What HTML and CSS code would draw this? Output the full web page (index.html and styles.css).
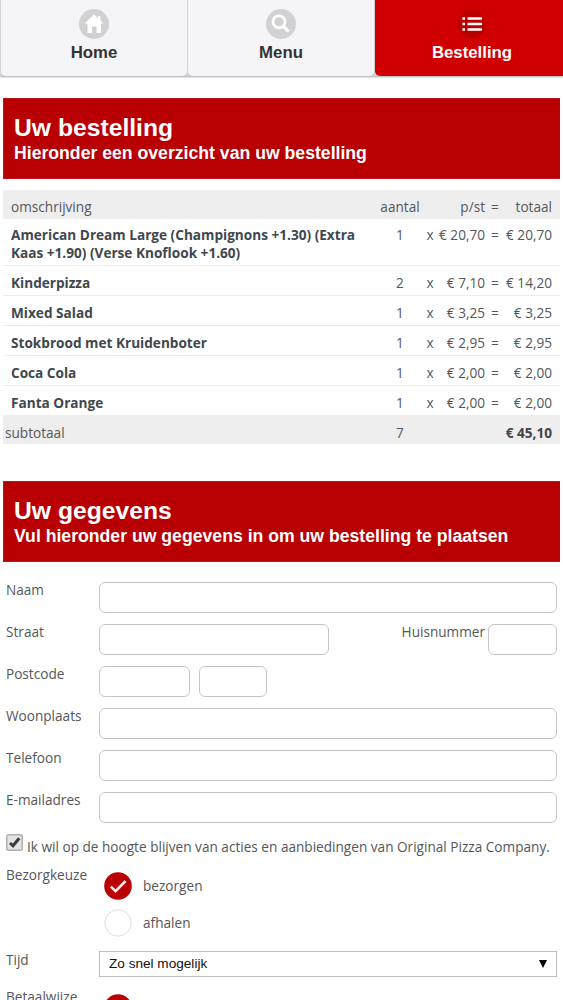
FILE: index.html
```html
<!DOCTYPE html>
<html lang="nl">
<head>
    <meta charset="UTF-8">
    <meta name="viewport" content="width=device-width, initial-scale=1.0">
    <title>Bestelling - Original Pizza Company</title>
    <link rel="stylesheet" href="styles.css">
</head>
<body>

    <nav class="tabs">
        <a class="tab" href="#">
            <svg class="tab-icon" viewBox="0 0 30 30">
                <circle cx="15" cy="15" r="15" fill="#d1d0d2"/>
                <path d="M15 5.5L5.5 14.5H8.5V24H13V17.5H17.5V24H22V14.5H24.5L21.5 11.5V7H19V9.2Z" fill="#fff"/>
            </svg>
            <span>Home</span>
        </a>
        <a class="tab" href="#">
            <svg class="tab-icon" viewBox="0 0 30 30">
                <circle cx="15" cy="15" r="15" fill="#d1d0d2"/>
                <circle cx="13" cy="12.8" r="6" fill="none" stroke="#fff" stroke-width="2.8"/>
                <path d="M17.2 17L22.6 22.6" stroke="#fff" stroke-width="3.2"/>
            </svg>
            <span>Menu</span>
        </a>
        <a class="tab active" href="#">
            <svg class="tab-icon" viewBox="0 0 30 30">
                <circle cx="15" cy="15" r="14" fill="#b90000"/>
                <path d="M11.5 9.5H24M11.5 15H24M11.5 20.5H24" stroke="#fff" stroke-width="2.5" stroke-linecap="round"/>
                <path d="M5.4 9.5H8M5.4 15H8M5.4 20.5H8" stroke="#fff" stroke-width="2.5"/>
            </svg>
            <span>Bestelling</span>
        </a>
    </nav>

    <div class="title">
        <h1>Uw bestelling</h1>
        <h2>Hieronder een overzicht van uw bestelling</h2>
    </div>

    <table class="order">
        <colgroup>
            <col>
            <col class="col-count">
            <col class="col-x">
            <col class="col-price">
            <col class="col-is">
            <col class="col-total">
        </colgroup>
        <thead>
            <tr><td>omschrijving</td><td>aantal</td><td></td><td>p/st</td><td>=</td><td>totaal</td></tr>
        </thead>
        <tbody>
            <tr><td>American Dream Large (Champignons +1.30) (Extra Kaas +1.90) (Verse Knoflook +1.60)</td><td>1</td><td>x</td><td>€ 20,70</td><td>=</td><td>€ 20,70</td></tr>
            <tr><td>Kinderpizza</td><td>2</td><td>x</td><td>€ 7,10</td><td>=</td><td>€ 14,20</td></tr>
            <tr><td>Mixed Salad</td><td>1</td><td>x</td><td>€ 3,25</td><td>=</td><td>€ 3,25</td></tr>
            <tr><td>Stokbrood met Kruidenboter</td><td>1</td><td>x</td><td>€ 2,95</td><td>=</td><td>€ 2,95</td></tr>
            <tr><td>Coca Cola</td><td>1</td><td>x</td><td>€ 2,00</td><td>=</td><td>€ 2,00</td></tr>
            <tr><td>Fanta Orange</td><td>1</td><td>x</td><td>€ 2,00</td><td>=</td><td>€ 2,00</td></tr>
        </tbody>
        <tfoot>
            <tr><td>subtotaal</td><td>7</td><td></td><td></td><td></td><td>€ 45,10</td></tr>
        </tfoot>
    </table>

    <div class="title">
        <h1>Uw gegevens</h1>
        <h2>Vul hieronder uw gegevens in om uw bestelling te plaatsen</h2>
    </div>

    <form class="details">
        <div class="row">
            <label for="naam">Naam</label>
            <input type="text" id="naam" class="wide">
        </div>
        <div class="row">
            <label for="straat">Straat</label>
            <input type="text" id="straat" class="street">
            <label for="huisnummer" class="number-label">Huisnummer</label>
            <input type="text" id="huisnummer" class="number">
        </div>
        <div class="row">
            <label for="postcode">Postcode</label>
            <input type="text" id="postcode" class="zip">
            <input type="text" id="postcodeLetters" class="zip-letters">
        </div>
        <div class="row">
            <label for="woonplaats">Woonplaats</label>
            <input type="text" id="woonplaats" class="wide">
        </div>
        <div class="row">
            <label for="telefoon">Telefoon</label>
            <input type="text" id="telefoon" class="wide">
        </div>
        <div class="row">
            <label for="email">E-mailadres</label>
            <input type="text" id="email" class="wide">
        </div>

        <div class="newsletter">
            <svg class="checkbox" viewBox="0 0 17 17">
                <rect x=".75" y=".75" width="15.5" height="15.5" rx="2" fill="#e4e4e4" stroke="#b0b0b0" stroke-width="1.5"/>
                <path d="M4 9L7 11.8L13.2 4.2" fill="none" stroke="#3c3c3c" stroke-width="3"/>
            </svg>
            <span>Ik wil op de hoogte blijven van acties en aanbiedingen van Original Pizza Company.</span>
        </div>

        <div class="choice">
            <span class="choice-label">Bezorgkeuze</span>
            <div class="options">
                <div class="option">
                    <svg class="radio" viewBox="0 0 28 28">
                        <circle cx="14" cy="14" r="13.8" fill="#b90004"/>
                        <path d="M6.8 14.6L11.6 19.2L21.6 9" fill="none" stroke="#ffe4e4" stroke-width="2.6"/>
                    </svg>
                    <span>bezorgen</span>
                </div>
                <div class="option">
                    <svg class="radio" viewBox="0 0 28 28">
                        <circle cx="14" cy="14" r="13.2" fill="#fff" stroke="#dedede"/>
                    </svg>
                    <span>afhalen</span>
                </div>
            </div>
        </div>

        <div class="time">
            <span class="choice-label">Tijd</span>
            <div class="select">
                <span>Zo snel mogelijk</span>
                <svg class="arrow" viewBox="0 0 8 8"><path d="M0 0H8L4 8Z"/></svg>
            </div>
        </div>

        <div class="choice">
            <span class="choice-label">Betaalwijze</span>
            <div class="options">
                <div class="option">
                    <svg class="radio" viewBox="0 0 28 28">
                        <circle cx="14" cy="14" r="13.8" fill="#b90004"/>
                        <path d="M6.8 14.6L11.6 19.2L21.6 9" fill="none" stroke="#ffe4e4" stroke-width="2.6"/>
                    </svg>
                </div>
            </div>
        </div>
    </form>

</body>
</html>
```
FILE: styles.css
```css
* {
    box-sizing: border-box;
}
html, body {
    height: 1000px;
    overflow: hidden;
}
body {
    margin: 0;
    background: #fff;
    color: #545759;
    font-family: "Open Sans", sans-serif;
    font-size: 13.62px;
    line-height: 18px;
}
svg {
    display: block;
    flex: none;
}
.tabs {
    display: grid;
    grid-template-columns: 186px 186px 1fr;
    column-gap: 1px;
    height: 76px;
    padding-left: 1px;
    background: #d3d2d4;
    box-shadow: 0 1px 2px rgba(0, 0, 0, 0.35);
}
.tab {
    display: flex;
    flex-direction: column;
    align-items: center;
    padding-top: 9px;
    background: #f5f4f7;
    border-radius: 0 0 5px 5px;
    color: #333;
    font: bold 16.8px/20px "Liberation Sans", Arial, sans-serif;
    text-decoration: none;
}
.tab.active {
    padding-left: 6px;
    background: #d00000;
    border-radius: 0 0 0 5px;
    color: #fff;
}
.tab-icon {
    width: 30px;
    height: 30px;
    margin-bottom: 4px;
}
.title {
    height: 81px;
    margin: 22px 3px 0;
    padding: 15px 11px 0 10px;
    background: #b80003;
    border: 1px solid #bd1518;
    border-right: 0;
    color: #fff;
    font-family: "Liberation Sans", Arial, sans-serif;
}
.title h1 {
    margin: 0;
    font-size: 24.7px;
    line-height: 28px;
}
.title h2 {
    margin: 0;
    font-size: 17.65px;
    line-height: 23px;
}
.order {
    width: 557px;
    margin: 11px 0 0 3px;
    table-layout: fixed;
    border-collapse: collapse;
}
.col-count {
    width: 50px;
}
.col-x {
    width: 10px;
}
.col-price {
    width: 50px;
}
.col-is {
    width: 20px;
}
.col-total {
    width: 55px;
}
.order td {
    height: 30px;
    padding: 8px 0 3px;
    text-align: center;
    vertical-align: top;
    white-space: nowrap;
}
.order td:first-child {
    padding-left: 8px;
    text-align: left;
    white-space: normal;
}
.order td:nth-child(4),
.order td:last-child {
    text-align: right;
}
.order td:last-child {
    padding-right: 8px;
}
.order thead td,
.order tfoot td {
    height: 28px;
    background: #efeeef;
}
.order tbody tr + tr {
    border-top: 1px solid #ececf0;
}
.order tbody tr:first-child td {
    padding-top: 7px;
}
.order tbody tr:last-child td {
    height: 29px;
    padding-bottom: 2px;
}
.order tbody td:first-child {
    color: #40484e;
    font-weight: bold;
}
.order tfoot td {
    padding: 9px 0 2px;
}
.order tfoot td:first-child {
    padding-left: 2px;
}
.order tfoot td:last-child {
    color: #444;
    font-weight: bold;
}
.order + .title {
    margin-top: 37px;
}
.details {
    padding: 20px 6px 0;
}
.row {
    display: flex;
    height: 42px;
}
.row label {
    width: 93px;
    margin-top: -1px;
}
.row input {
    height: 31px;
    border: 1px solid #c6c4c8;
    border-radius: 6px;
    background: #fff;
}
.row .wide {
    width: 458px;
}
.row .street {
    width: 230px;
}
.row .number-label {
    width: auto;
    margin-left: auto;
    margin-right: 3px;
}
.row .number {
    width: 69px;
}
.row .zip {
    width: 91px;
}
.row .zip-letters {
    width: 68px;
    margin-left: 9px;
}
.newsletter {
    display: flex;
    height: 33px;
}
.newsletter span {
    margin: 4px 0 0 4px;
    white-space: nowrap;
}
.checkbox {
    width: 17px;
    height: 17px;
}
.choice,
.time {
    display: flex;
}
.choice-label {
    width: 93px;
    flex: none;
}
.choice .choice-label {
    margin-top: -1px;
}
.time {
    margin: 5px 0 12px;
}
.options {
    padding: 5px 0 0 5px;
}
.option {
    display: flex;
    align-items: center;
    height: 28px;
    margin-bottom: 9px;
}
.option span {
    margin-left: 11px;
}
.radio {
    width: 28px;
    height: 28px;
}
.select {
    flex: 1;
    display: flex;
    align-items: center;
    justify-content: space-between;
    height: 26px;
    padding: 0 9px;
    border: 1px solid #bfbfbf;
    color: #111;
    font: 13.6px "Liberation Sans", Arial, sans-serif;
}
.arrow {
    width: 8px;
    height: 8px;
}
```
